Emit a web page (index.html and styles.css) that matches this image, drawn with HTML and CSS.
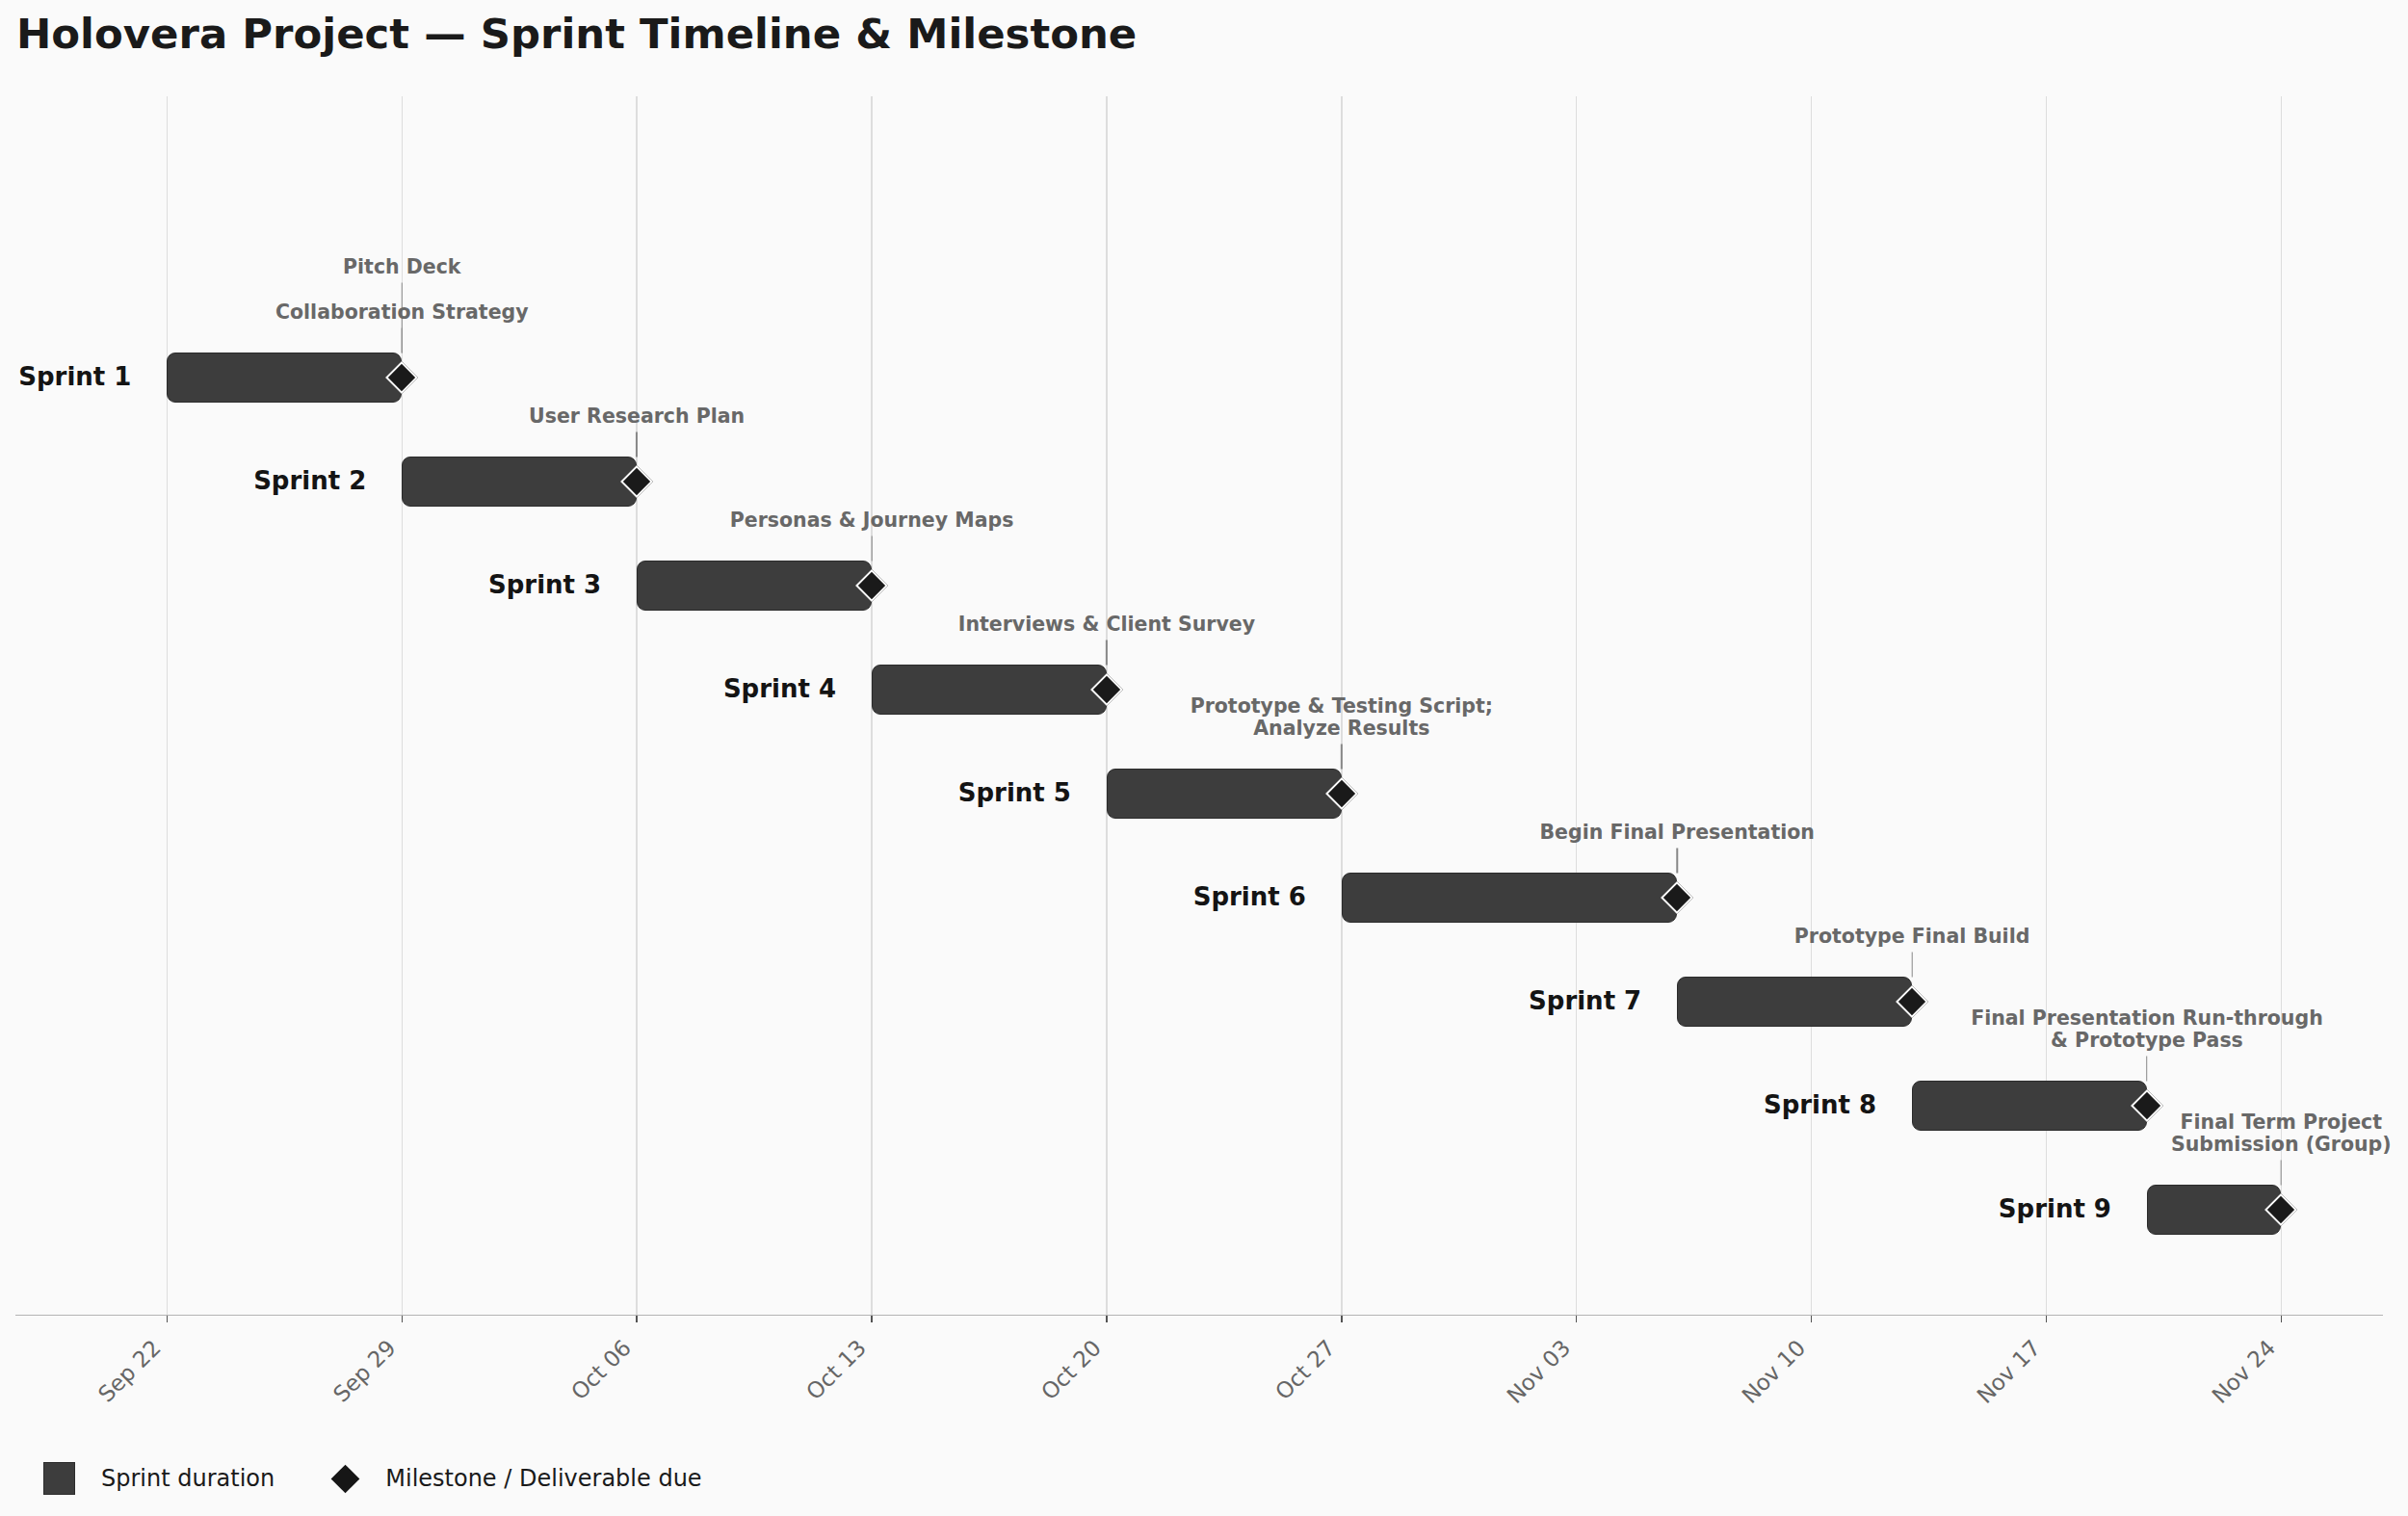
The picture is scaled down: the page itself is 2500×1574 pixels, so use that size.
FILE: index.html
```html
<!DOCTYPE html>
<html lang="en">
<head>
<meta charset="utf-8">
<title>Holovera Project — Sprint Timeline &amp; Milestone</title>
<link rel="stylesheet" href="styles.css">
</head>
<body>
<div class="figure">
  <h1 class="title">Holovera Project — Sprint Timeline &amp; Milestone</h1>

  <div class="plot">
    <div class="grid" style="--d:0"></div>
    <div class="grid" style="--d:7"></div>
    <div class="grid" style="--d:14"></div>
    <div class="grid" style="--d:21"></div>
    <div class="grid" style="--d:28"></div>
    <div class="grid" style="--d:35"></div>
    <div class="grid" style="--d:42"></div>
    <div class="grid" style="--d:49"></div>
    <div class="grid" style="--d:56"></div>
    <div class="grid" style="--d:63"></div>

    <div class="ann ann-tall" style="--e:7;--r:0"><span class="ann-text">Pitch Deck</span><span class="ann-line"></span></div>
    <div class="ann" style="--e:7;--r:0"><span class="ann-text">Collaboration Strategy</span><span class="ann-line"></span></div>
    <div class="ann" style="--e:14;--r:1"><span class="ann-text">User Research Plan</span><span class="ann-line"></span></div>
    <div class="ann" style="--e:21;--r:2"><span class="ann-text">Personas &amp; Journey Maps</span><span class="ann-line"></span></div>
    <div class="ann" style="--e:28;--r:3"><span class="ann-text">Interviews &amp; Client Survey</span><span class="ann-line"></span></div>
    <div class="ann" style="--e:35;--r:4"><span class="ann-text">Prototype &amp; Testing Script;<br>Analyze Results</span><span class="ann-line"></span></div>
    <div class="ann" style="--e:45;--r:5"><span class="ann-text">Begin Final Presentation</span><span class="ann-line"></span></div>
    <div class="ann" style="--e:52;--r:6"><span class="ann-text">Prototype Final Build</span><span class="ann-line"></span></div>
    <div class="ann" style="--e:59;--r:7"><span class="ann-text">Final Presentation Run-through<br>&amp; Prototype Pass</span><span class="ann-line"></span></div>
    <div class="ann" style="--e:63;--r:8"><span class="ann-text">Final Term Project<br>Submission (Group)</span><span class="ann-line"></span></div>

    <div class="label" style="--s:0;--r:0">Sprint 1</div>
    <div class="bar" style="--s:0;--e:7;--r:0"></div>
    <div class="ms" style="--e:7;--r:0"></div>

    <div class="label" style="--s:7;--r:1">Sprint 2</div>
    <div class="bar" style="--s:7;--e:14;--r:1"></div>
    <div class="ms" style="--e:14;--r:1"></div>

    <div class="label" style="--s:14;--r:2">Sprint 3</div>
    <div class="bar" style="--s:14;--e:21;--r:2"></div>
    <div class="ms" style="--e:21;--r:2"></div>

    <div class="label" style="--s:21;--r:3">Sprint 4</div>
    <div class="bar" style="--s:21;--e:28;--r:3"></div>
    <div class="ms" style="--e:28;--r:3"></div>

    <div class="label" style="--s:28;--r:4">Sprint 5</div>
    <div class="bar" style="--s:28;--e:35;--r:4"></div>
    <div class="ms" style="--e:35;--r:4"></div>

    <div class="label" style="--s:35;--r:5">Sprint 6</div>
    <div class="bar" style="--s:35;--e:45;--r:5"></div>
    <div class="ms" style="--e:45;--r:5"></div>

    <div class="label" style="--s:45;--r:6">Sprint 7</div>
    <div class="bar" style="--s:45;--e:52;--r:6"></div>
    <div class="ms" style="--e:52;--r:6"></div>

    <div class="label" style="--s:52;--r:7">Sprint 8</div>
    <div class="bar" style="--s:52;--e:59;--r:7"></div>
    <div class="ms" style="--e:59;--r:7"></div>

    <div class="label" style="--s:59;--r:8">Sprint 9</div>
    <div class="bar" style="--s:59;--e:63;--r:8"></div>
    <div class="ms" style="--e:63;--r:8"></div>
  </div>

  <div class="xaxis">
    <div class="tick" style="--d:0"><span class="tick-mark"></span><span class="tick-label">Sep 22</span></div>
    <div class="tick" style="--d:7"><span class="tick-mark"></span><span class="tick-label">Sep 29</span></div>
    <div class="tick" style="--d:14"><span class="tick-mark"></span><span class="tick-label">Oct 06</span></div>
    <div class="tick" style="--d:21"><span class="tick-mark"></span><span class="tick-label">Oct 13</span></div>
    <div class="tick" style="--d:28"><span class="tick-mark"></span><span class="tick-label">Oct 20</span></div>
    <div class="tick" style="--d:35"><span class="tick-mark"></span><span class="tick-label">Oct 27</span></div>
    <div class="tick" style="--d:42"><span class="tick-mark"></span><span class="tick-label">Nov 03</span></div>
    <div class="tick" style="--d:49"><span class="tick-mark"></span><span class="tick-label">Nov 10</span></div>
    <div class="tick" style="--d:56"><span class="tick-mark"></span><span class="tick-label">Nov 17</span></div>
    <div class="tick" style="--d:63"><span class="tick-mark"></span><span class="tick-label">Nov 24</span></div>
  </div>

  <div class="legend">
    <div class="legend-item">
      <span class="legend-square"></span>
      <span class="legend-text">Sprint duration</span>
    </div>
    <div class="legend-item">
      <span class="legend-diamond-wrap"><span class="legend-diamond"></span></span>
      <span class="legend-text">Milestone / Deliverable due</span>
    </div>
  </div>
</div>
</body>
</html>
```

FILE: styles.css
```css
* { box-sizing: border-box; }

html, body {
  margin: 0;
  padding: 0;
  background: #fafafa;
}

body {
  width: 2500px;
  height: 1574px;
  overflow: hidden;
  font-family: "DejaVu Sans", "Liberation Sans", sans-serif;
  color: #1a1a1a;
}

.figure {
  display: flex;
  flex-direction: column;
  width: 2500px;
  height: 1574px;
}

.title {
  margin: 0;
  padding: 13px 0 0 17px;
  height: 57px;
  font-size: 43.4px;
  line-height: 44px;
  font-weight: bold;
  color: #1a1a1a;
  white-space: nowrap;
}

/* plotting area: x 16..2474, y 100..1364 */
.plot {
  --x0: 157.4px;
  --day: 34.84px;
  --row0: 292px;
  --rowh: 108px;
  position: relative;
  margin: 43px 0 0 16px;
  width: 2458px;
  height: 1265.5px;
  border-bottom: 1.5px solid #b4b4b4;
  flex: none;
}

.grid {
  position: absolute;
  top: 0;
  bottom: 0;
  left: calc(var(--x0) + var(--d) * var(--day) - 0.75px);
  width: 1.5px;
  background: #dddddd;
}

.bar {
  position: absolute;
  left: calc(var(--x0) + var(--s) * var(--day));
  width: calc((var(--e) - var(--s)) * var(--day));
  top: calc(var(--row0) + var(--r) * var(--rowh) - 26px);
  height: 52px;
  background: #3d3d3d;
  border: 1.5px solid #2b2b2b;
  border-radius: 9px;
}

.ms {
  position: absolute;
  left: calc(var(--x0) + var(--e) * var(--day) - 12px);
  top: calc(var(--row0) + var(--r) * var(--rowh) - 12px);
  width: 24px;
  height: 24px;
  background: #1a1a1a;
  border: 2.2px solid #ffffff;
  transform: rotate(45deg);
}

.label {
  position: absolute;
  right: calc(2458px - var(--x0) - var(--s) * var(--day) + 37px);
  top: calc(var(--row0) + var(--r) * var(--rowh) - 14px);
  font-size: 26px;
  line-height: 26px;
  font-weight: bold;
  color: #141414;
  white-space: nowrap;
}

.ann {
  position: absolute;
  left: calc(var(--x0) + var(--e) * var(--day));
  top: calc(var(--row0) + var(--r) * var(--rowh) - 26px);
  transform: translate(-50%, -100%);
  display: flex;
  flex-direction: column;
  align-items: center;
}

.ann-text {
  font-size: 20.5px;
  line-height: 23px;
  font-weight: bold;
  color: #686868;
  text-align: center;
  white-space: nowrap;
  margin-bottom: 4.5px;
}

.ann-line {
  display: block;
  width: 1.5px;
  height: 26px;
  background: #888888;
}

.ann-tall .ann-line {
  height: 73px;
}

/* x axis ticks and labels */
.xaxis {
  --x0: 157.4px;
  --day: 34.84px;
  position: relative;
  margin-left: 16px;
  width: 2458px;
  height: 152.5px;
  flex: none;
}

.tick {
  position: absolute;
  top: 0;
  left: calc(var(--x0) + var(--d) * var(--day));
  width: 0;
  height: 0;
}

.tick-mark {
  position: absolute;
  left: -0.75px;
  top: 0;
  width: 1.5px;
  height: 7px;
  background: #555555;
}

.tick-label {
  position: absolute;
  right: 10px;
  top: 16px;
  font-size: 23px;
  line-height: 27px;
  color: #666666;
  white-space: nowrap;
  transform-origin: 100% 50%;
  transform: rotate(-45deg);
}

/* legend */
.legend {
  display: flex;
  align-items: center;
  gap: 58px;
  padding-left: 45px;
  height: 34px;
  flex: none;
}

.legend-item {
  display: flex;
  align-items: center;
  gap: 27px;
}

.legend-square {
  display: block;
  width: 33px;
  height: 34px;
  background: #3d3d3d;
  border: 1.5px solid #2b2b2b;
}

.legend-diamond-wrap {
  display: flex;
  align-items: center;
  justify-content: center;
  width: 30px;
  height: 30px;
}

.legend-diamond {
  display: block;
  width: 21px;
  height: 21px;
  background: #161616;
  transform: rotate(45deg);
}

.legend-text {
  font-size: 24px;
  line-height: 28px;
  color: #1a1a1a;
  white-space: nowrap;
}
```
